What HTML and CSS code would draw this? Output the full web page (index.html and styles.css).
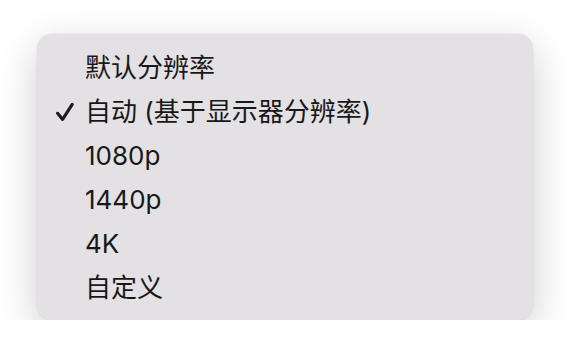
FILE: index.html
```html
<!DOCTYPE html>
<html lang="zh-CN">
<head>
<meta charset="utf-8">
<link rel="stylesheet" href="styles.css">
</head>
<body>
<div class="page">
  <div class="menu">
    <div class="item"><span class="check"></span><span class="label">默认分辨率</span></div>
    <div class="item"><span class="check"><svg width="18" height="19" viewBox="0 0 18 19"><path d="M1.6 10.3 L6.6 16.4 L16.2 1.4" fill="none" stroke="#1c1c1c" stroke-width="3.1" stroke-linecap="round" stroke-linejoin="round"/></svg></span><span class="label">自动 (基于显示器分辨率)</span></div>
    <div class="item"><span class="check"></span><span class="label">1080p</span></div>
    <div class="item"><span class="check"></span><span class="label">1440p</span></div>
    <div class="item"><span class="check"></span><span class="label">4K</span></div>
    <div class="item"><span class="check"></span><span class="label">自定义</span></div>
  </div>
</div>
</body>
</html>
```
FILE: styles.css
```css
html, body {
  margin: 0;
  background: #ffffff;
}
.page {
  padding: 34px 0 0 37px;
}
.menu {
  width: 496px;
  box-sizing: border-box;
  padding: 12px 0 10px 0;
  background: #e3e1e3;
  border-radius: 15px;
  box-shadow: 0 12px 40px rgba(0, 0, 0, 0.2), 0 0 0 1px rgba(0, 0, 0, 0.03);
  font-family: "Inter", "Noto Sans CJK SC", sans-serif;
  font-size: 26px;
  font-weight: 400;
  color: #181818;
}
.item {
  display: flex;
  align-items: center;
  height: 44px;
  line-height: 44px;
}
.check {
  width: 48px;
  flex: none;
  display: flex;
  align-items: center;
  padding-left: 19px;
  box-sizing: border-box;
}
.check svg {
  display: block;
}
.label {
  white-space: nowrap;
}
```
